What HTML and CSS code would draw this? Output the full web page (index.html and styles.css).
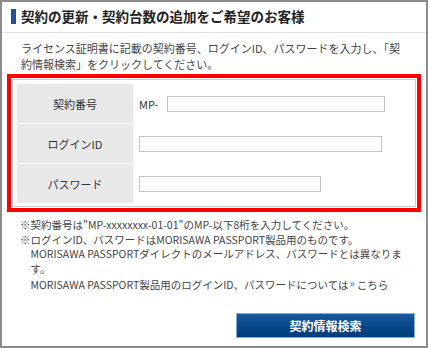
FILE: index.html
```html
<!DOCTYPE html>
<html lang="ja">
<head>
<meta charset="utf-8">
<title>契約の更新</title>
<link rel="stylesheet" href="styles.css">
</head>
<body>
<div class="page">
  <div class="head">
    <h2 class="title">契約の更新・契約台数の追加をご希望のお客様</h2>
  </div>
  <p class="intro">ライセンス証明書に記載の契約番号、ログインID、パスワードを入力し、「契約情報検索」をクリックしてください。</p>
  <div class="highlight">
    <div class="form-box">
      <div class="row">
        <div class="label">契約番号</div>
        <div class="value"><span class="prefix">MP-</span><input class="field f-contract" type="text"></div>
      </div>
      <div class="row">
        <div class="label">ログインID</div>
        <div class="value"><input class="field f-login" type="text"></div>
      </div>
      <div class="row">
        <div class="label">パスワード</div>
        <div class="value"><input class="field f-pass" type="password"></div>
      </div>
    </div>
  </div>
  <ul class="notes">
    <li>※契約番号は"MP-xxxxxxxx-01-01"のMP-以下8桁を入力してください。</li>
    <li>※ログインID、パスワードはMORISAWA PASSPORT製品用のものです。<br>MORISAWA PASSPORTダイレクトのメールアドレス、パスワードとは異なります。<br>MORISAWA PASSPORT製品用のログインID、パスワードについては<a class="link" href="#"><span class="raquo">»</span>こちら</a></li>
  </ul>
  <div class="actions">
    <button class="btn" type="button">契約情報検索</button>
  </div>
</div>
</body>
</html>
```

FILE: styles.css
```css
* { box-sizing: border-box; }
html, body { margin: 0; padding: 0; background: #fff; }
body {
  font-family: "Noto Sans CJK JP", "Noto Sans", sans-serif;
  color: #444;
}
.page {
  width: 428px;
  height: 348px;
  border: 2px solid #8c8c8c;
  background: #fff;
}
.head {
  padding: 7px 0 8px 9px;
  border-bottom: 1px solid #e2e2e2;
}
.title {
  margin: 0;
  border-left: 5px solid #234f98;
  padding-left: 5px;
  font-size: 13.5px;
  line-height: 15px;
  font-weight: bold;
  color: #222;
}
.intro {
  margin: 7px 0 0;
  padding: 0 20px 0 19px;
  font-size: 11px;
  line-height: 16px;
  color: #444;
}
.highlight {
  margin: 2px 5px 0;
  border: 4px solid #ff0000;
  padding: 1px;
}
.form-box {
  border: 1px solid #cccccc;
  padding: 4px 0 3px 4px;
  display: grid;
  row-gap: 1px;
}
.row {
  display: grid;
  grid-template-columns: 116px 1fr;
  height: 39px;
}
.label {
  background: #e8e8e8;
  display: flex;
  align-items: center;
  justify-content: center;
  font-size: 11px;
  color: #333;
}
.value {
  display: flex;
  align-items: center;
  padding-left: 6px;
  font-size: 11px;
  color: #333;
}
.prefix { width: 28px; }
.field {
  height: 16px;
  border: 1px solid #c4c4c4;
  padding: 0 2px;
  margin: 0;
  background: #fff;
  font-size: 11px;
}
.f-contract { width: 218px; }
.f-login { width: 243px; }
.f-pass { width: 182px; }
.notes {
  list-style: none;
  margin: 6px 0 0;
  padding: 0 24px 0 18px;
  font-size: 10.5px;
  line-height: 14.5px;
  color: #444;
}
.notes li {
  padding-left: 10.5px;
  text-indent: -10.5px;
}
.link {
  color: #444;
  text-decoration: none;
}
.raquo {
  color: #2f8fe6;
  font-size: 10px;
  font-weight: bold;
  vertical-align: 2px;
  margin: 0 2px 0 1px;
}
.actions {
  display: flex;
  justify-content: flex-end;
  padding: 0 11px 0 0;
  margin-top: 20px;
}
.btn {
  width: 179px;
  height: 25px;
  border: 1px solid #86acd8;
  background: linear-gradient(to bottom, #1a5a9c 0%, #0b4b8c 45%, #003c78 100%);
  color: #fff;
  font-family: "Noto Sans CJK JP", sans-serif;
  font-size: 12px;
  font-weight: bold;
  padding: 0;
}
```
